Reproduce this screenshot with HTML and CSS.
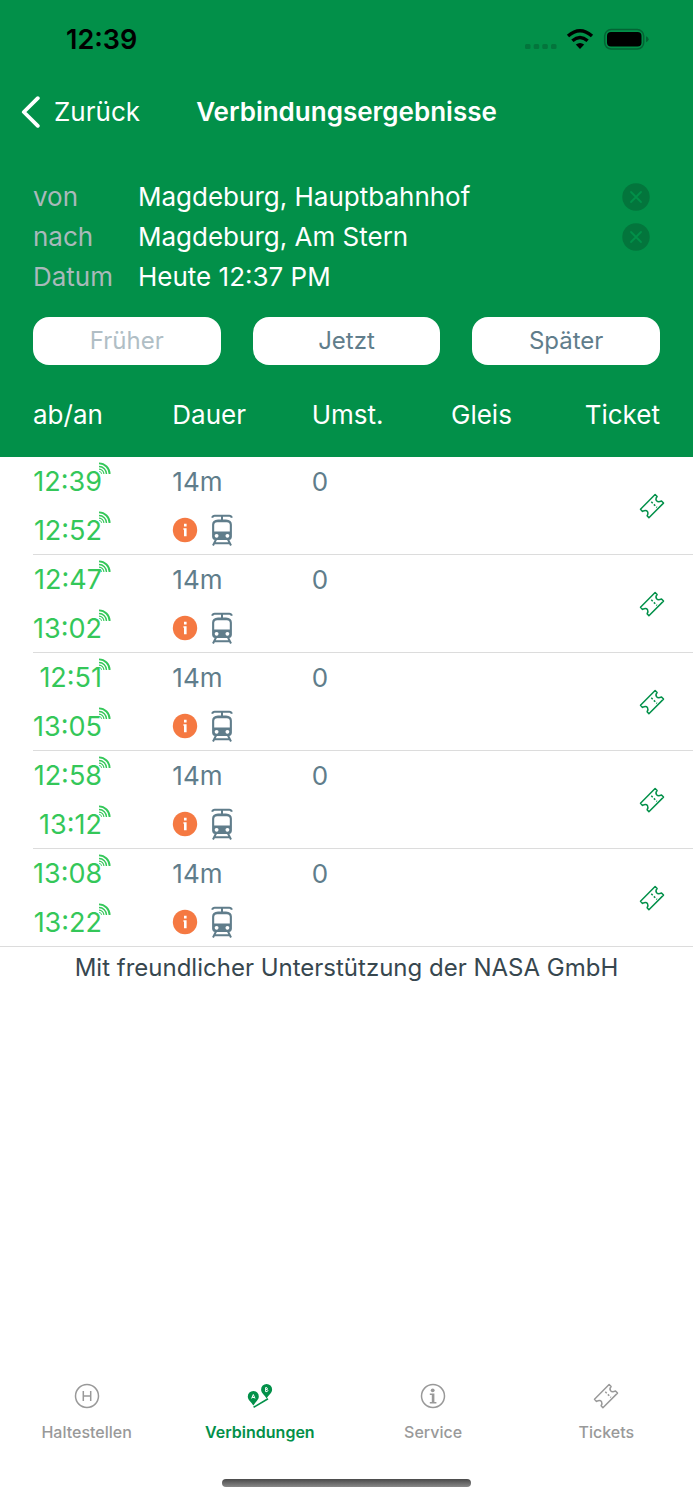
FILE: index.html
```html
<!DOCTYPE html>
<html lang="de">
<head>
<meta charset="utf-8">
<meta name="viewport" content="width=device-width, initial-scale=1">
<title>Verbindungsergebnisse</title>
<link rel="stylesheet" href="styles.css">
</head>
<body>
<svg class="sprite" aria-hidden="true">
  <symbol id="live" viewBox="0 0 13 13">
    <g fill="none" stroke="currentColor">
      <path d="M1 1.4A10.6 10.6 0 0 1 11.6 12" stroke-width="1.9"/>
      <path d="M1 4.5A7.5 7.5 0 0 1 8.5 12" stroke-width="1.4"/>
      <path d="M1 7.1A4.9 4.9 0 0 1 5.9 12" stroke-width="1.1"/>
      <path d="M1 9.4A2.6 2.6 0 0 1 3.6 12" stroke-width=".8"/>
    </g>
  </symbol>
  <symbol id="info" viewBox="0 0 26 26">
    <circle cx="13" cy="13" r="12.2" fill="#f57942"/>
    <path d="M12 6.8h2.6v2.6H12zM11.4 11.2h3.2v8H12v-6.4h-.6z" fill="#fff"/>
  </symbol>
  <symbol id="tram" viewBox="0 0 22 32">
    <path d="M1.200 3.800Q1.700 1.700 3.700 1.700H18.300Q20.300 1.700 20.800 3.800M11 1.700V6" fill="none" stroke="currentColor" stroke-width="2"/>
    <path fill="currentColor" fill-rule="evenodd" d="M7 5.600h8q5.900.4 5.900 5V22.500q0 3-3 3.600H4.100Q1.100 25.500 1.100 22.500V10.600q0-4.600 5.900-5zM6.200 8.200Q3.200 8.500 3.200 11v6.400h15.600V11q0-2.500-3-2.800zM5.600 19.900a1.900 1.900 0 1 0 .01 0zM16.400 19.900a1.900 1.900 0 1 0 .01 0z"/>
    <path d="M5 25.500L2 31.500M17 25.500l3 6M3.500 29.200h15" fill="none" stroke="currentColor" stroke-width="2"/>
  </symbol>
  <symbol id="ticket" viewBox="0 0 26 26">
    <path d="M16.100 1.500L1.500 16.200l2 2.200q3.600-1.900 5 .2 1 1.700-.4 4.200l1.800 1.900L24.500 10.100l-2-2.200q-3.200 1.700-4.900-.1-1.500-1.800.5-4.300z" fill="none" stroke="currentColor" stroke-width="1.500" stroke-linejoin="round"/>
    <path d="M12.300 8.800l5.600 5.600" fill="none" stroke="currentColor" stroke-width="1.500" stroke-dasharray="2 1.600"/>
  </symbol>
  <symbol id="clear" viewBox="0 0 28 28">
    <circle cx="14" cy="14" r="13.700" fill="#03753c"/>
    <path d="M9 9l10 10M19 9L9 19" stroke="#029049" stroke-width="1.800" stroke-linecap="round"/>
  </symbol>
</svg>

<header class="top">
  <div class="status">
    <time class="clock">12:39</time>
    <svg class="status-icons" viewBox="0 0 126 24" aria-hidden="true">
      <g fill="#03753c"><rect x="1" y="16" width="5.500" height="5" rx="1.500"/><rect x="9.700" y="16" width="5.500" height="5" rx="1.500"/><rect x="18.300" y="16" width="5.500" height="5" rx="1.500"/><rect x="27" y="16" width="5.500" height="5" rx="1.500"/></g>
      <g fill="none" stroke="#000" stroke-width="3.400"><path d="M44 8Q56 -2.600 68 8"/><path d="M48.400 12.800Q56 6.300 63.600 12.800"/></g>
      <path d="M51.800 16.600Q56 13.400 60.200 16.600L56 21z"/>
      <rect x="80.700" y="1.600" width="39" height="19.400" rx="6.500" fill="none" stroke="#036434" stroke-width="1.500"/>
      <rect x="83" y="4" width="34.500" height="14.600" rx="4"/>
      <path d="M122 8.200q2.600.8 2.600 3t-2.600 3z" fill="#036434"/>
    </svg>
  </div>
  <div class="navbar">
    <button class="back" type="button">
      <svg class="chevron" viewBox="0 0 20 32" aria-hidden="true"><path d="M17.800 2.200L3.800 16l14 13.800" fill="none" stroke="#fff" stroke-width="3.800" stroke-linecap="round" stroke-linejoin="round"/></svg>
      Zurück
    </button>
    <h1>Verbindungsergebnisse</h1>
  </div>
  <form class="query">
    <div class="field">
      <label for="from">von</label>
      <input id="from" type="text" value="Magdeburg, Hauptbahnhof">
      <button class="clear" type="button" aria-label="Start löschen"><svg><use href="#clear"/></svg></button>
    </div>
    <div class="field">
      <label for="to">nach</label>
      <input id="to" type="text" value="Magdeburg, Am Stern">
      <button class="clear" type="button" aria-label="Ziel löschen"><svg><use href="#clear"/></svg></button>
    </div>
    <div class="field">
      <label for="date">Datum</label>
      <input id="date" type="text" value="Heute 12:37 PM">
    </div>
    <div class="shift">
      <button type="button" disabled>Früher</button>
      <button type="button">Jetzt</button>
      <button type="button">Später</button>
    </div>
  </form>
</header>

<main>
  <table class="results">
    <thead>
      <tr><th>ab/an</th><th>Dauer</th><th>Umst.</th><th>Gleis</th><th class="end">Ticket</th></tr>
    </thead>
    <tbody>
      <tr>
        <td><div class="time"><span>12:39</span><svg><use href="#live"/></svg></div><div class="time"><span>12:52</span><svg><use href="#live"/></svg></div></td>
        <td><div class="line">14m</div><div class="line modes"><svg class="info"><use href="#info"/></svg><svg class="tram"><use href="#tram"/></svg></div></td>
        <td><div class="line">0</div></td><td></td>
        <td class="buy"><a href="#tickets" aria-label="Ticket kaufen"><svg><use href="#ticket"/></svg></a></td>
      </tr>
      <tr>
        <td><div class="time"><span>12:47</span><svg><use href="#live"/></svg></div><div class="time"><span>13:02</span><svg><use href="#live"/></svg></div></td>
        <td><div class="line">14m</div><div class="line modes"><svg class="info"><use href="#info"/></svg><svg class="tram"><use href="#tram"/></svg></div></td>
        <td><div class="line">0</div></td><td></td>
        <td class="buy"><a href="#tickets" aria-label="Ticket kaufen"><svg><use href="#ticket"/></svg></a></td>
      </tr>
      <tr>
        <td><div class="time"><span>12:51</span><svg><use href="#live"/></svg></div><div class="time"><span>13:05</span><svg><use href="#live"/></svg></div></td>
        <td><div class="line">14m</div><div class="line modes"><svg class="info"><use href="#info"/></svg><svg class="tram"><use href="#tram"/></svg></div></td>
        <td><div class="line">0</div></td><td></td>
        <td class="buy"><a href="#tickets" aria-label="Ticket kaufen"><svg><use href="#ticket"/></svg></a></td>
      </tr>
      <tr>
        <td><div class="time"><span>12:58</span><svg><use href="#live"/></svg></div><div class="time"><span>13:12</span><svg><use href="#live"/></svg></div></td>
        <td><div class="line">14m</div><div class="line modes"><svg class="info"><use href="#info"/></svg><svg class="tram"><use href="#tram"/></svg></div></td>
        <td><div class="line">0</div></td><td></td>
        <td class="buy"><a href="#tickets" aria-label="Ticket kaufen"><svg><use href="#ticket"/></svg></a></td>
      </tr>
      <tr>
        <td><div class="time"><span>13:08</span><svg><use href="#live"/></svg></div><div class="time"><span>13:22</span><svg><use href="#live"/></svg></div></td>
        <td><div class="line">14m</div><div class="line modes"><svg class="info"><use href="#info"/></svg><svg class="tram"><use href="#tram"/></svg></div></td>
        <td><div class="line">0</div></td><td></td>
        <td class="buy"><a href="#tickets" aria-label="Ticket kaufen"><svg><use href="#ticket"/></svg></a></td>
      </tr>
    </tbody>
  </table>
  <p class="credit">Mit freundlicher Unterstützung der NASA GmbH</p>
</main>

<nav class="tabs">
  <a href="#haltestellen">
    <svg viewBox="0 0 26 26" aria-hidden="true"><circle cx="13" cy="13" r="11.500" fill="none" stroke="currentColor" stroke-width="1.500"/><path d="M9.300 8v10M16.700 8v10M9.300 13h7.400" fill="none" stroke="currentColor" stroke-width="1.500"/></svg>
    Haltestellen
  </a>
  <a href="#verbindungen" class="active" aria-current="page">
    <svg viewBox="0 0 26 26" aria-hidden="true">
      <path fill="currentColor" d="M6.300 8a5.500 5.500 0 0 1 5.500 5.500c0 3.500-3.500 5.500-5.500 9-2-3.500-5.500-5.500-5.500-9A5.500 5.500 0 0 1 6.300 8zM19.600 1a5.500 5.500 0 0 1 5.500 5.500c0 3.500-3.500 5.500-5.500 9-2-3.500-5.500-5.500-5.500-9A5.500 5.500 0 0 1 19.600 1z"/>
      <path d="M6.600 24.300L21 15.800" stroke="currentColor" stroke-width="1.600"/>
      <path d="M4.600 15.500l1.700-4 1.700 4M5.200 14.500h2.200M18.600 4.600h1.200q1.300.8 0 1.800h-1.200zM18.600 6.400h1.600q1.300 1.200 0 2.200h-1.600z" fill="none" stroke="#fff" stroke-width="1"/>
    </svg>
    Verbindungen
  </a>
  <a href="#service">
    <svg viewBox="0 0 26 26" aria-hidden="true"><circle cx="13" cy="13" r="11.500" fill="none" stroke="currentColor" stroke-width="1.500"/><circle cx="12.700" cy="7.300" r="1.900" fill="currentColor"/><path d="M9.800 10.600h4.600v8.300h2v1.500H9.800v-1.500h2v-6.800h-2z" fill="currentColor"/></svg>
    Service
  </a>
  <a href="#tickets">
    <svg viewBox="0 0 26 26" aria-hidden="true"><use href="#ticket"/></svg>
    Tickets
  </a>
</nav>
<div class="home"></div>
</body>
</html>
```

FILE: styles.css
```css
* { box-sizing: border-box; }

body {
  margin: 0;
  min-height: 100vh;
  display: flex;
  flex-direction: column;
  background: #fff;
  color: #607d8b;
  font: 400 26px/32px Inter, "Liberation Sans", sans-serif;
}

button, input {
  font: inherit;
  color: inherit;
  border: 0;
  padding: 0;
  background: none;
}

a { color: inherit; text-decoration: none; }
svg { display: block; flex: none; }
.sprite { position: absolute; width: 0; height: 0; }

.top { background: #029049; color: #fff; }

.status {
  height: 80px;
  padding: 0 43px 0 66px;
  display: flex;
  align-items: center;
  justify-content: space-between;
  color: #000;
}
.clock { font-size: 27px; font-weight: 600; }
.status-icons { width: 126px; height: 24px; }

.navbar {
  height: 64px;
  display: grid;
  grid-template-columns: 1fr auto 1fr;
  align-items: center;
  padding: 0 20px;
}
.back { display: flex; align-items: center; gap: 14px; justify-self: start; }
.chevron { width: 20px; height: 32px; }
h1 { margin: 0; font-size: 26px; font-weight: 600; }

.query { padding: 33px 33px 0; }
.field { display: flex; align-items: center; height: 40px; padding-right: 10px; }
.field label { width: 105px; color: #a9b9bb; }
.field input { flex: 1; min-width: 0; outline: 0; }
.clear svg { width: 28px; height: 28px; }

.shift {
  display: grid;
  grid-template-columns: repeat(3, 1fr);
  gap: 32px;
  padding-top: 20px;
}
.shift button {
  height: 48px;
  border-radius: 16px;
  background: #fff;
  color: #607d8b;
  font-size: 24px;
}
.shift button:disabled { color: #b0bec5; }

.results, .results thead, .results tbody { display: block; }
.results tr {
  display: grid;
  grid-template-columns: repeat(4, minmax(0, 2fr)) minmax(0, 1fr);
  padding-right: 33px;
  margin-left: 33px;
}
.results th, .results td { padding: 0; font-weight: 400; text-align: left; }
.results thead { background: #029049; color: #fff; padding: 34px 0 26px; }
.results .end { display: flex; justify-content: flex-end; }
.results tbody tr + tr { border-top: 1px solid #dcdcdc; }

.time, .line { display: flex; height: 49px; line-height: 49px; }
.time + .time, .line + .line { height: 48px; }
.time { color: #34c759; font-size: 27px; }
.time span { width: 69px; text-align: right; }
.time svg { width: 13px; height: 13px; margin: 5px 0 0 -4px; }
.modes { align-items: center; gap: 13px; }
.info { width: 26px; height: 26px; }
.tram { width: 22px; height: 32px; }

.buy { display: flex; align-items: center; justify-content: flex-end; color: #029049; }
.buy a { margin-right: -5px; }
.buy svg { width: 26px; height: 26px; }

.credit {
  margin: 0;
  padding: 5px 16px;
  border-top: 1px solid #dcdcdc;
  color: #37474f;
  font-size: 24px;
  text-align: center;
}

.tabs {
  margin-top: auto;
  display: grid;
  grid-template-columns: repeat(4, 1fr);
  color: #999;
  font-size: 16px;
  font-weight: 500;
  line-height: 20px;
}
.tabs a { display: flex; flex-direction: column; align-items: center; gap: 13px; }
.tabs svg { width: 26px; height: 26px; }
.tabs .active { color: #029049; font-weight: 600; }

.home {
  width: 36%;
  height: 8px;
  margin: 37px auto 13px;
  border-radius: 4px;
  background: linear-gradient(#4a4a4a, #888);
}
```
